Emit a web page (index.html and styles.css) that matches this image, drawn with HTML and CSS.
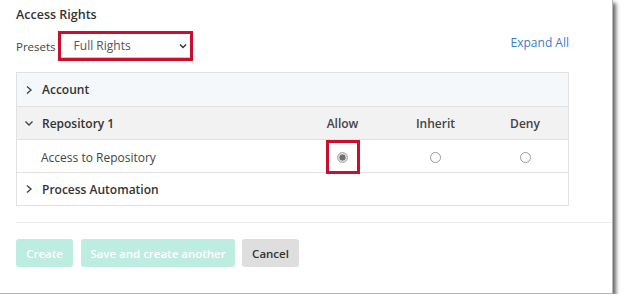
FILE: index.html
```html
<!DOCTYPE html>
<html>
<head>
<meta charset="utf-8">
<link rel="stylesheet" href="styles.css">
</head>
<body>
<div class="panel">
  <div class="content">
    <div class="title">Access Rights</div>
    <div class="presets-row">
      <div class="presets">
        <span class="presets-label">Presets</span>
        <div class="select-frame">
          <div class="select-wrap">
            <select class="select"><option>Full Rights</option></select>
            <svg class="select-chevron" width="8" height="6" viewBox="0 0 8 6"><path d="M1 1.5 L4 4.5 L7 1.5" fill="none" stroke="#333" stroke-width="1.4"/></svg>
          </div>
        </div>
      </div>
      <a class="expand" href="#">Expand All</a>
    </div>
    <div class="table">
      <div class="row row-account">
        <div class="cell name bold">
          <svg class="chev" width="8" height="10" viewBox="0 0 8 10"><path d="M2 1.5 L6 5 L2 8.5" fill="none" stroke="#444" stroke-width="1.4"/></svg>
          Account
        </div>
      </div>
      <div class="row row-head">
        <div class="cell name bold">
          <svg class="chev" width="8" height="10" viewBox="0 0 8 10"><path d="M0.5 3.5 L4 7 L7.5 3.5" fill="none" stroke="#444" stroke-width="1.4"/></svg>
          Repository 1
        </div>
        <div class="cell col">Allow</div>
        <div class="cell col">Inherit</div>
        <div class="cell col">Deny</div>
      </div>
      <div class="row">
        <div class="cell name sub">Access to Repository</div>
        <div class="cell col"><span class="radio-frame"><span class="radio checked"></span></span></div>
        <div class="cell col"><span class="radio"></span></div>
        <div class="cell col"><span class="radio"></span></div>
      </div>
      <div class="row">
        <div class="cell name bold">
          <svg class="chev" width="8" height="10" viewBox="0 0 8 10"><path d="M2 1.5 L6 5 L2 8.5" fill="none" stroke="#444" stroke-width="1.4"/></svg>
          Process Automation
        </div>
      </div>
    </div>
  </div>
  <div class="separator"></div>
  <div class="buttons">
    <button class="btn btn-primary btn-create">Create</button>
    <button class="btn btn-primary btn-save">Save and create another</button>
    <button class="btn btn-cancel">Cancel</button>
  </div>
</div>
</body>
</html>
```
FILE: styles.css
```css
* { box-sizing: border-box; }
html, body { margin: 0; padding: 0; background: #fff; }
body {
  font-family: "Open Sans", "Noto Sans", sans-serif;
  font-size: 12px;
  color: #333;
}
.panel {
  width: 613px;
  height: 294px;
  background: #fff;
  border-right: 1px solid #b5b5b5;
  border-bottom: 1px solid #b5b5b5;
  box-shadow: 3px 3px 4px rgba(0, 0, 0, 0.6);
  padding-top: 6px;
}
.content {
  width: 553px;
  margin-left: 16px;
}
.title {
  font-size: 12.5px;
  font-weight: 600;
  line-height: 18px;
  color: #333;
}
.presets-row {
  display: flex;
  justify-content: space-between;
  align-items: flex-start;
  margin-top: 7px;
}
.presets {
  display: flex;
  align-items: center;
  height: 30px;
}
.presets-label {
  color: #444;
  font-size: 11.5px;
  margin-right: 2px;
}
.select-frame {
  border: 3px solid #c8102e;
  width: 135px;
  height: 30px;
}
.select-wrap {
  position: relative;
  height: 24px;
}
.select {
  appearance: none;
  -webkit-appearance: none;
  width: 100%;
  height: 24px;
  border: none;
  border-bottom: 1px solid #b3cde6;
  background: #fff;
  font-family: inherit;
  font-size: 12px;
  color: #555;
  padding: 0 0 0 13px;
  margin: 0;
  outline: none;
}
.select-chevron {
  position: absolute;
  right: 3px;
  top: 9px;
}
.expand {
  margin-top: 3px;
  line-height: 18px;
  color: #3b7dc4;
  text-decoration: none;
  font-size: 12px;
}
.table {
  margin-top: 11px;
  border: 1px solid #e1e1e1;
}
.row {
  display: grid;
  grid-template-columns: 279px 93px 93px 86px;
  height: 33px;
  border-top: 1px solid #e1e1e1;
  background: #fff;
}
.row:first-child { border-top: none; height: 33px; }
.row-account { background: #f4f8fb; }
.row-head { background: #f2f2f2; }
.cell {
  display: flex;
  align-items: center;
}
.name {
  padding-left: 8px;
  gap: 9px;
}
.bold { font-weight: 600; color: #333; }
.sub { padding-left: 24px; color: #444; }
.col {
  justify-content: center;
  font-weight: 600;
  color: #444;
}
.chev { flex: none; }
.radio {
  display: inline-block;
  width: 11px;
  height: 11px;
  border-radius: 50%;
  border: 1px solid #9a9a9a;
  background: #fff;
}
.radio.checked {
  border-color: #aaa;
  background: radial-gradient(circle, #6f6f6f 0 2.8px, #d9d9d9 3.3px 100%);
}
.radio-frame {
  display: flex;
  align-items: center;
  justify-content: center;
  width: 34px;
  height: 34px;
  border: 3px solid #c8102e;
}
.separator {
  margin-left: 16px;
  margin-top: 16px;
  height: 1px;
  background: #ececec;
}
.buttons {
  display: flex;
  gap: 7px;
  margin-left: 16px;
  margin-top: 16px;
}
.btn {
  height: 28px;
  border: none;
  border-radius: 3px;
  padding: 0 9px;
  font-family: inherit;
  font-size: 11.5px;
  font-weight: 600;
}
.btn-create { width: 57px; margin-right: 1px; }
.btn-save { width: 154px; }
.btn-cancel { width: 57px; }
.btn-primary {
  background: #bdece0;
  color: #fff;
}
.btn-cancel {
  background: #dedede;
  color: #333;
}
```
